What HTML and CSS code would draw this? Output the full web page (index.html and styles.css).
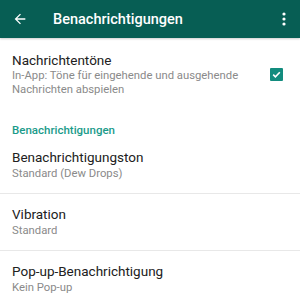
FILE: index.html
```html
<!DOCTYPE html>
<html lang="de">
<head>
    <meta charset="UTF-8">
    <meta name="viewport" content="width=device-width, initial-scale=1.0">
    <title>Benachrichtigungen</title>
    <link rel="stylesheet" href="styles.css">
</head>
<body>
    <div class="toolbar">
        <svg class="back" width="16" height="16" viewBox="0 0 24 24">
            <path d="M20 11H7.83l5.59-5.59L12 4l-8 8 8 8 1.41-1.41L7.83 13H20v-2z" fill="#fff"/>
        </svg>
        <span class="toolbar-title">Benachrichtigungen</span>
        <svg class="menu" width="4" height="14" viewBox="0 0 4 14">
            <circle cx="2" cy="2" r="1.6" fill="#fff"/>
            <circle cx="2" cy="7" r="1.6" fill="#fff"/>
            <circle cx="2" cy="12" r="1.6" fill="#fff"/>
        </svg>
    </div>

    <div class="pref pref-check">
        <div class="pref-text">
            <div class="pref-title">Nachrichtentöne</div>
            <div class="pref-summary">In-App: Töne für eingehende und ausgehende Nachrichten abspielen</div>
        </div>
        <div class="checkbox">
            <svg width="13" height="13" viewBox="0 0 13 13">
                <path d="M3.2 6.6l2.2 2.2 4.4-4.6" stroke="#fff" stroke-width="1.6" fill="none"/>
            </svg>
        </div>
    </div>

    <div class="category">Benachrichtigungen</div>

    <div class="pref">
        <div class="pref-title">Benachrichtigungston</div>
        <div class="pref-summary">Standard (Dew Drops)</div>
    </div>
    <div class="pref">
        <div class="pref-title">Vibration</div>
        <div class="pref-summary">Standard</div>
    </div>
    <div class="pref">
        <div class="pref-title">Pop-up-Benachrichtigung</div>
        <div class="pref-summary">Kein Pop-up</div>
    </div>
</body>
</html>
```

FILE: styles.css
```css
body {
    margin: 0;
    padding: 0;
    font-family: Roboto, "Liberation Sans", sans-serif;
    background-color: #fff;
    color: #212121;
    width: 300px;
    height: 303px;
    overflow: hidden;
}
.toolbar {
    height: 38px;
    background-color: #075e54;
    display: flex;
    align-items: center;
    padding: 0 14px 0 12px;
    box-shadow: 0 1px 2px rgba(0, 0, 0, 0.2);
}
.back {
    margin-right: 25px;
}
.toolbar-title {
    flex: 1;
    color: #fff;
    font-size: 14.5px;
    font-weight: 500;
}
.pref {
    height: 56px;
    padding: 0 12px;
    display: flex;
    flex-direction: column;
    justify-content: center;
    border-bottom: 1px solid #e8e8e8;
}
.pref:last-child {
    border-bottom: none;
}
.pref-check {
    height: auto;
    padding-top: 13px;
    padding-bottom: 10px;
    flex-direction: row;
    align-items: center;
    border-bottom: none;
}
.pref-text {
    flex: 1;
}
.pref-title {
    font-size: 13.5px;
    line-height: 17px;
}
.pref-check .pref-title {
    line-height: 18px;
}
.pref-summary {
    font-size: 11.3px;
    line-height: 15px;
    color: #8a8a8a;
}
.pref-check .pref-summary {
    line-height: 14px;
}
.checkbox {
    width: 13px;
    height: 13px;
    border-radius: 1px;
    background-color: #128c7e;
    margin: 0 5px 0 20px;
}
.checkbox svg {
    display: block;
}
.category {
    padding: 16px 12px 0;
    font-size: 11.5px;
    line-height: 14px;
    font-weight: 500;
    color: #1a9b8a;
}
```
